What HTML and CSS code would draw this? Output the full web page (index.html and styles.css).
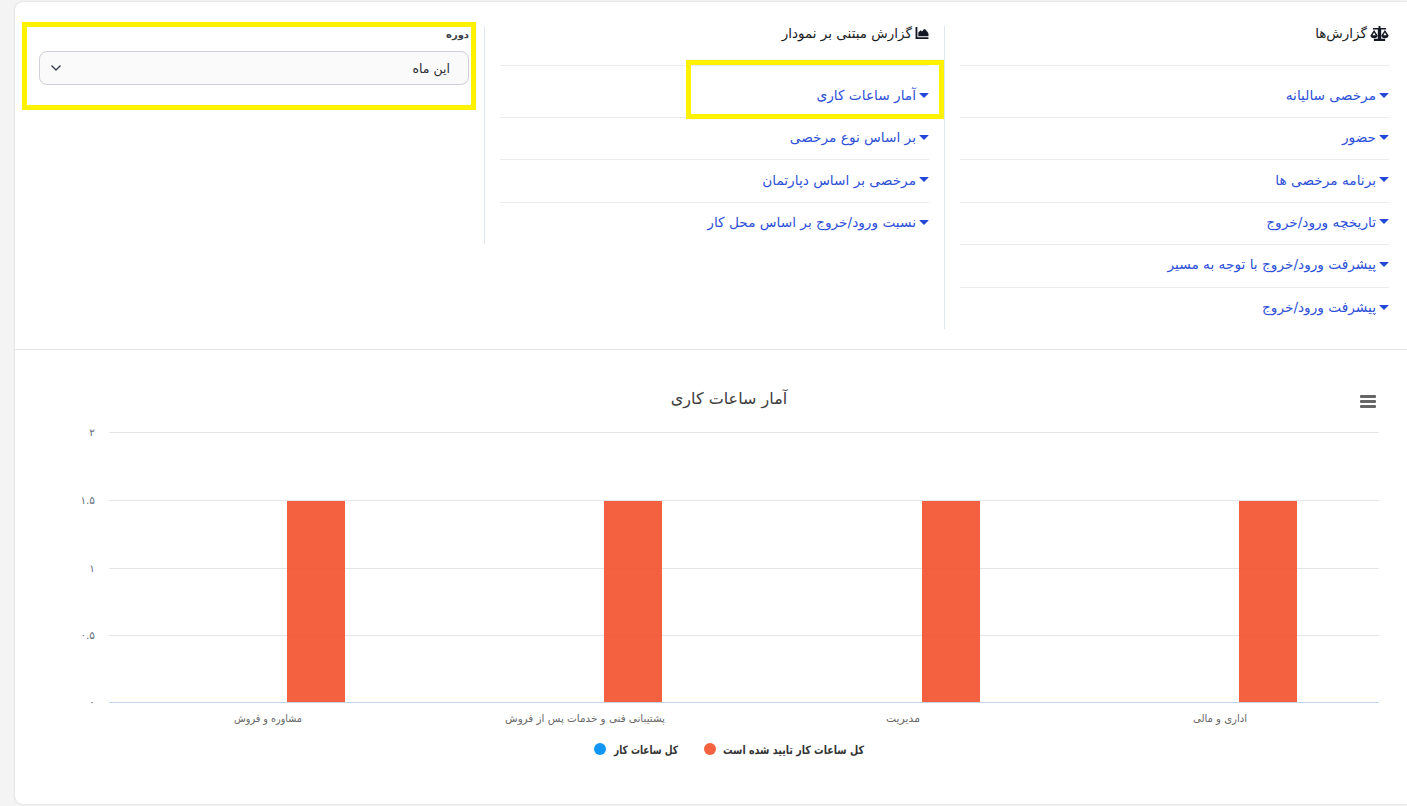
FILE: index.html
```html
<!DOCTYPE html>
<html lang="fa" dir="rtl">
<head>
<meta charset="utf-8">
<title>گزارش‌ها</title>
<link rel="stylesheet" href="styles.css">
</head>
<body>
<main class="card">
  <section class="reports">
    <div class="col col-a">
      <h3 class="col-title">
        <svg class="title-icon scale" viewBox="0 0 20 16"><path d="M9 0h2v2h6v1.700h-5.200v10H16V16H4v-2.300h4.200v-10H3V2h6z"/><path d="M4.200 4.200L0.300 10.200c0 1.800 1.800 2.800 3.900 2.800s3.900-1 3.900-2.800zM4.200 6.800L5.900 9.800H2.500zM15.800 4.200l-3.900 6c0 1.800 1.800 2.800 3.900 2.800s3.900-1 3.900-2.800zM15.800 6.800l1.700 3H14.100z"/></svg>
        گزارش‌ها
      </h3>
      <ul class="links">
        <li><i class="caret"></i><a>مرخصی سالیانه</a></li>
        <li><i class="caret"></i><a>حضور</a></li>
        <li><i class="caret"></i><a>برنامه مرخصی ها</a></li>
        <li><i class="caret"></i><a>تاریخچه ورود/خروج</a></li>
        <li><i class="caret"></i><a>پیشرفت ورود/خروج با توجه به مسیر</a></li>
        <li><i class="caret"></i><a>پیشرفت ورود/خروج</a></li>
      </ul>
    </div>
    <div class="col col-b">
      <h3 class="col-title">
        <svg class="title-icon area" viewBox="0 0 14 13"><path d="M0 0h2v11h12v2H0z"/><path d="M3 10V6l2.500-2.500L7 5l2-2.500h1.500L13 5.500 14 7v3z"/></svg>
        گزارش مبتنی بر نمودار
      </h3>
      <ul class="links">
        <li class="marked"><i class="caret"></i><a>آمار ساعات کاری</a></li>
        <li><i class="caret"></i><a>بر اساس نوع مرخصی</a></li>
        <li><i class="caret"></i><a>مرخصی بر اساس دپارتمان</a></li>
        <li><i class="caret"></i><a>نسبت ورود/خروج بر اساس محل کار</a></li>
      </ul>
    </div>
    <div class="col-c">
      <div class="filter">
        <label class="filter-label">دوره</label>
        <div class="select">
          <span>این ماه</span>
          <svg class="chevron" viewBox="0 0 12 8"><path d="M1.500 1.500L6 6l4.500-4.500"/></svg>
        </div>
      </div>
    </div>
  </section>
  <section class="chart">
    <svg class="chart-svg" viewBox="0 0 1392 454" dir="rtl">
      <text class="chart-title" x="714" y="54">آمار ساعات کاری</text>
      <g class="menu"><rect x="1345" y="45" width="16" height="3" rx="1"/><rect x="1345" y="50" width="16" height="3" rx="1"/><rect x="1345" y="55" width="16" height="3" rx="1"/></g>
      <g class="grid">
        <line x1="94" x2="1364" y1="82.500" y2="82.500"/>
        <line x1="94" x2="1364" y1="150.500" y2="150.500"/>
        <line x1="94" x2="1364" y1="218.500" y2="218.500"/>
        <line x1="94" x2="1364" y1="285.500" y2="285.500"/>
      </g>
      <g class="bars">
        <rect x="272" y="151" width="58" height="201"/>
        <rect x="589" y="151" width="58" height="201"/>
        <rect x="907" y="151" width="58" height="201"/>
        <rect x="1224" y="151" width="58" height="201"/>
      </g>
      <line class="axis" x1="94" x2="1364" y1="352.500" y2="352.500"/>
      <g class="ticks">
        <text x="80" y="86">۲</text>
        <text x="80" y="154">۱.۵</text>
        <text x="80" y="222">۱</text>
        <text x="80" y="289">۰.۵</text>
        <text x="80" y="356">۰</text>
      </g>
      <g class="cats">
        <text x="253" y="372" textLength="68" lengthAdjust="spacingAndGlyphs">مشاوره و فروش</text>
        <text x="570" y="372" textLength="160" lengthAdjust="spacingAndGlyphs">پشتیبانی فنی و خدمات پس از فروش</text>
        <text x="888" y="372" textLength="34" lengthAdjust="spacingAndGlyphs">مدیریت</text>
        <text x="1205" y="372" textLength="54" lengthAdjust="spacingAndGlyphs">اداری و مالی</text>
      </g>
      <g class="legend">
        <text x="849" y="404" textLength="141" lengthAdjust="spacingAndGlyphs">کل ساعات کار تایید شده است</text>
        <circle class="dot-orange" cx="695" cy="399" r="6"/>
        <text x="663" y="404" textLength="64" lengthAdjust="spacingAndGlyphs">کل ساعات کار</text>
        <circle class="dot-blue" cx="585" cy="399" r="6"/>
      </g>
    </svg>
  </section>
</main>
</body>
</html>
```
FILE: styles.css
```css
*, *::after { box-sizing: border-box; }
html, body { margin: 0; height: 100%; }
body {
  background: #f4f4f5;
  font-family: "DejaVu Sans", sans-serif;
  padding: 2px 0 2px 15px;
  overflow: hidden;
  color: #1a1c22;
}
.card {
  background: #fff;
  height: 802px;
  border-radius: 8px 0 0 8px;
  box-shadow: 0 0 2px rgba(0, 0, 0, .18);
}
.reports {
  display: flex;
  align-items: flex-start;
  height: 348px;
  padding-top: 24px;
  border-bottom: 1px solid #e5e7eb;
}
.col { border-left: 1px solid #e1e7f0; }
.col-a { width: 463px; padding: 0 18px 0 15px; }
.col-b { width: 460px; padding: 0 15px 0 15px; }
.col-title {
  margin: 0;
  height: 40px;
  border-bottom: 1px solid #e9ebee;
  font-size: 13.500px;
  font-weight: 400;
  line-height: 15px;
  display: flex;
  align-items: flex-start;
  gap: 3px;
  color: #1a1c22;
}
.title-icon { fill: #141824; flex: none; margin-top: 0; }
.scale { width: 19px; height: 15px; }
.area { width: 14px; height: 12px; margin-top: 1px; }
.links { list-style: none; margin: 0; padding: 0; }
.links li {
  position: relative;
  display: flex;
  align-items: center;
  gap: 3px;
  height: 42.400px;
  padding-bottom: 3px;
  border-bottom: 1px solid #e9ebee;
  font-size: 13.700px;
  color: #2e50d8;
}
.links li:first-child { height: 52px; padding: 7px 0 0; }
.links li:last-child { border-bottom: 0; height: 41px; padding: 0 0 2px; }
.caret {
  width: 0;
  height: 0;
  border-style: solid;
  border-width: 5px 5px 0;
  border-color: #2347d6 transparent transparent;
  border-radius: 1px;
  margin-top: 0;
  flex: none;
}
.marked::after {
  content: "";
  position: absolute;
  top: -6px;
  right: -15px;
  width: 258px;
  height: 59px;
  border: 5px solid #fff200;
  pointer-events: none;
}
.col-c { flex: 1; padding: 0 15px 0 7px; }
.filter {
  height: 88px;
  margin-top: -4px;
  border: 5px solid #fff200;
  padding: 0 2px 0 12px;
  margin-right: -7px;
}
.filter-label {
  display: block;
  font-size: 10px;
  font-weight: 700;
  line-height: 14px;
  color: #3c3f47;
  margin: 1px 0 9px;
}
.select {
  height: 34px;
  border: 1px solid #ced1dc;
  border-radius: 8px;
  background: #fafafb;
  display: flex;
  align-items: center;
  justify-content: space-between;
  padding: 0 18px 0 10px;
  font-size: 12.500px;
  color: #2a2c33;
}
.chevron { width: 12px; height: 8px; fill: none; stroke: #343a46; stroke-width: 1.300; }
.chart { height: 454px; }
.chart-svg { display: block; width: 1392px; height: 454px; font-family: "DejaVu Sans", sans-serif; }
.chart-title { font-size: 16px; fill: #3d3d3d; text-anchor: middle; }
.menu rect { fill: #666; }
.grid line { stroke: #e3e5e8; stroke-width: 1; }
.axis { stroke: #c5d3e8; stroke-width: 1; }
.bars rect { fill: #f3502b; fill-opacity: .9; }
.ticks text { font-size: 10.500px; fill: #666e80; text-anchor: start; }
.cats text { font-size: 10.500px; fill: #666; text-anchor: middle; }
.legend text { font-size: 11.500px; font-weight: 700; fill: #333; text-anchor: start; }
.dot-orange { fill: #f4623f; }
.dot-blue { fill: #1296f5; }
```
